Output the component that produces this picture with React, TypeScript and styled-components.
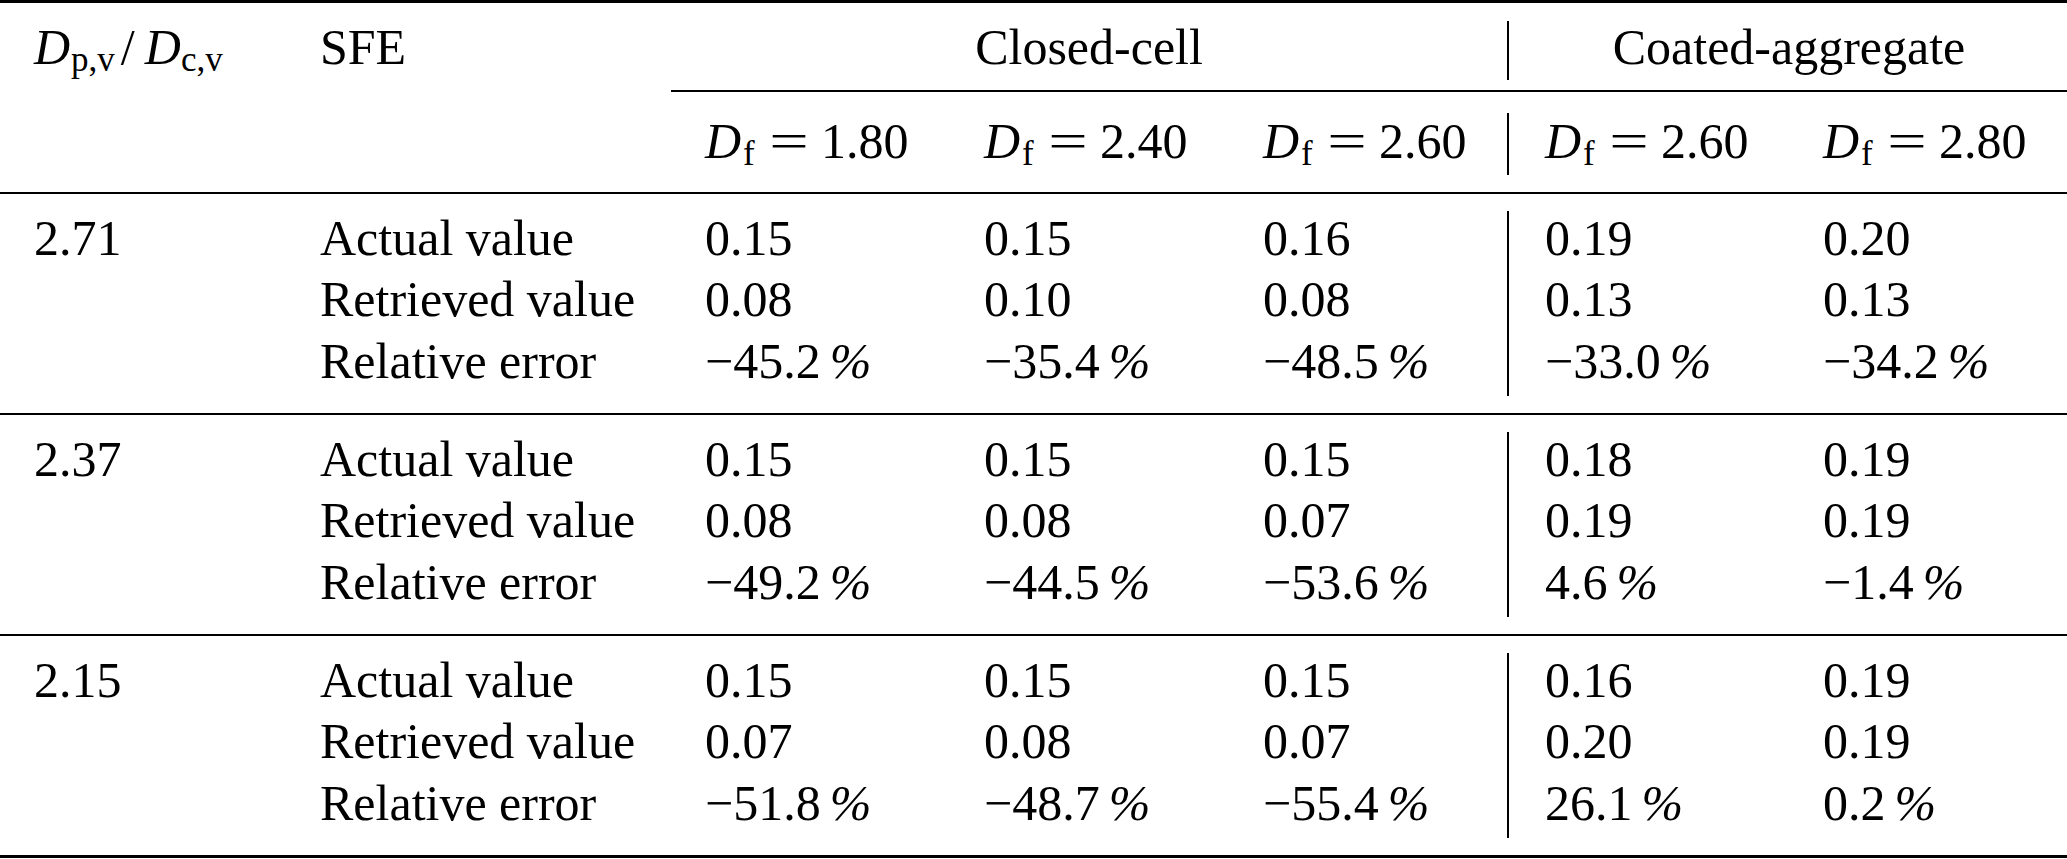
import React from 'react';
import styled, { createGlobalStyle } from 'styled-components';

const GlobalStyle = createGlobalStyle`
  html, body {
    margin: 0;
    padding: 0;
    background: #ffffff;
  }
`;

// column tracks: ratio | SFE | closed-cell x3 | divider | coated-aggregate x2
const COLUMNS = '286px 385px 279px 279px 278px 2px 280px 1fr';

const Table = styled.div`
  width: 2067px;
  display: flex;
  flex-direction: column;
  font-family: "Liberation Serif", "Times New Roman", serif;
  font-size: 50px;
  color: #000;
`;

const Rule = styled.div<{ $weight?: number }>`
  height: ${(p) => p.$weight ?? 2}px;
  background: #000;
`;

const RuleRow = styled.div`
  display: grid;
  grid-template-columns: ${COLUMNS};
`;

const RuleSegment = styled.div<{ $span: string }>`
  grid-column: ${(p) => p.$span};
  height: 2px;
  background: #000;
`;

const Band = styled.div<{ $padTop: number; $padBottom: number; $lineHeight: number }>`
  display: grid;
  grid-template-columns: ${COLUMNS};
  padding: ${(p) => p.$padTop}px 0 ${(p) => p.$padBottom}px;
  line-height: ${(p) => p.$lineHeight}px;
`;

const Cell = styled.div<{ $lead?: number }>`
  display: flex;
  flex-direction: column;
  padding-left: ${(p) => p.$lead ?? 34}px;
  white-space: nowrap;
`;

const GroupTitle = styled.div<{ $span: string; $lead?: number }>`
  grid-column: ${(p) => p.$span};
  padding: 0 34px 0 ${(p) => p.$lead ?? 34}px;
  text-align: center;
  white-space: nowrap;
`;

const Divider = styled.div<{ $top: number; $bottom: number }>`
  width: 1.7px;
  background: #000;
  margin-top: ${(p) => p.$top}px;
  margin-bottom: ${(p) => p.$bottom}px;
`;

const Var = styled.i`
  font-style: italic;
`;

const Sub = styled.span<{ $gap?: number }>`
  font-size: 35px;
  line-height: 0;
  vertical-align: -7px;
  margin-left: ${(p) => p.$gap ?? 0}px;
`;

const Slash = styled.span`
  margin: 0 10px 0 6px;
`;

const Eq = styled.span`
  display: inline-block;
  transform: scaleX(1.4);
  margin: 0 18px 0 20px;
`;

const Percent = styled.span`
  font-style: italic;
  margin-left: 9px;
`;

const F = (value: string) => (
  <>
    <Var>D</Var>
    <Sub $gap={2}>f</Sub>
    <Eq>=</Eq>
    {value}
  </>
);

type Block = { ratio: string; values: string[][]; errors: string[] };

const blocks: Block[] = [
  {
    ratio: '2.71',
    values: [
      ['0.15', '0.15', '0.16', '0.19', '0.20'],
      ['0.08', '0.10', '0.08', '0.13', '0.13'],
    ],
    errors: ['\u221245.2', '\u221235.4', '\u221248.5', '\u221233.0', '\u221234.2'],
  },
  {
    ratio: '2.37',
    values: [
      ['0.15', '0.15', '0.15', '0.18', '0.19'],
      ['0.08', '0.08', '0.07', '0.19', '0.19'],
    ],
    errors: ['\u221249.2', '\u221244.5', '\u221253.6', '4.6', '\u22121.4'],
  },
  {
    ratio: '2.15',
    values: [
      ['0.15', '0.15', '0.15', '0.16', '0.19'],
      ['0.07', '0.08', '0.07', '0.20', '0.19'],
    ],
    errors: ['\u221251.8', '\u221248.7', '\u221255.4', '26.1', '0.2'],
  },
];

const labels = ['Actual value', 'Retrieved value', 'Relative error'];

const column = (block: Block, i: number) => (
  <>
    <span>{block.values[0][i]}</span>
    <span>{block.values[1][i]}</span>
    <span>
      {block.errors[i]}
      <Percent>%</Percent>
    </span>
  </>
);

const BodyBlock: React.FC<{ block: Block }> = ({ block }) => (
  <Band $padTop={13.5} $padBottom={20.5} $lineHeight={61.7}>
    <Cell>
      <span>{block.ratio}</span>
    </Cell>
    <Cell>
      {labels.map((l) => (
        <span key={l}>{l}</span>
      ))}
    </Cell>
    <Cell>{column(block, 0)}</Cell>
    <Cell>{column(block, 1)}</Cell>
    <Cell>{column(block, 2)}</Cell>
    <Divider $top={3.5} $bottom={-3} />
    <Cell $lead={36}>{column(block, 3)}</Cell>
    <Cell>{column(block, 4)}</Cell>
  </Band>
);

const App: React.FC = () => {
  return (
    <>
      <GlobalStyle />
      <Table>
        <Rule $weight={3} />

        <Band $padTop={16} $padBottom={15} $lineHeight={56}>
          <Cell>
            <span>
              <Var>D</Var>
              <Sub $gap={1}>p,v</Sub>
              <Slash>/</Slash>
              <Var>D</Var>
              <Sub>c,v</Sub>
            </span>
          </Cell>
          <Cell>SFE</Cell>
          <GroupTitle $span="3 / 6">Closed-cell</GroupTitle>
          <Divider $top={2} $bottom={-5} />
          <GroupTitle $span="7 / 9" $lead={36}>
            Coated-aggregate
          </GroupTitle>
        </Band>

        <RuleRow>
          <RuleSegment $span="3 / -1" />
        </RuleRow>

        <Band $padTop={21} $padBottom={23} $lineHeight={56}>
          <Cell />
          <Cell />
          <Cell>
            <span>{F('1.80')}</span>
          </Cell>
          <Cell>
            <span>{F('2.40')}</span>
          </Cell>
          <Cell>
            <span>{F('2.60')}</span>
          </Cell>
          <Divider $top={0} $bottom={-6} />
          <Cell $lead={36}>
            <span>{F('2.60')}</span>
          </Cell>
          <Cell>
            <span>{F('2.80')}</span>
          </Cell>
        </Band>

        <Rule />
        <BodyBlock block={blocks[0]} />
        <Rule />
        <BodyBlock block={blocks[1]} />
        <Rule />
        <BodyBlock block={blocks[2]} />
        <Rule $weight={3} />
      </Table>
    </>
  );
};

export default App;
